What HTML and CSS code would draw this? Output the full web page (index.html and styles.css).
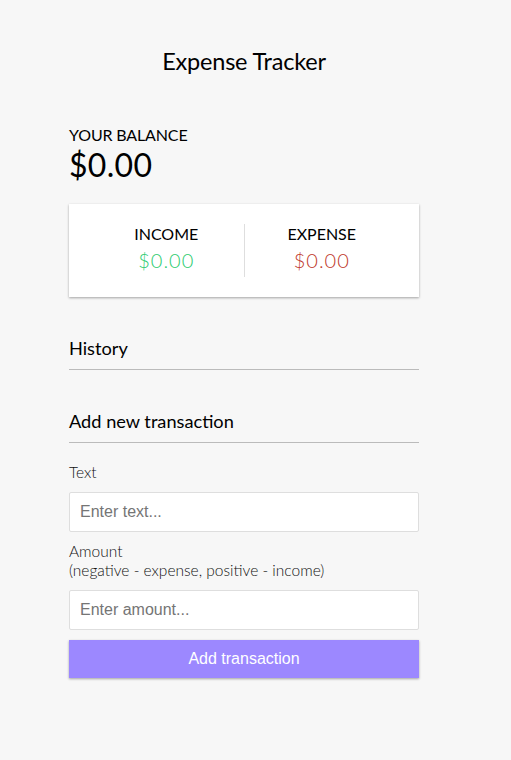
FILE: index.html
```
<!DOCTYPE html>
<html lang="en">
<head>
<meta charset="UTF-8">
<title>Expense Tracker</title>
<link rel="stylesheet" href="styles.css">
</head>
<body>
<div class="page">
  <h2 class="title">Expense Tracker</h2>
  <div class="container">
    <h4 class="balance-label">Your Balance</h4>
    <h1 class="balance">$0.00</h1>
    <div class="inc-exp">
      <div class="inc-exp-col">
        <h4 class="col-label">Income</h4>
        <p class="money plus">$0.00</p>
      </div>
      <div class="inc-exp-col">
        <h4 class="col-label">Expense</h4>
        <p class="money minus">$0.00</p>
      </div>
    </div>
    <h3 class="section">History</h3>
    <ul class="list"></ul>
    <h3 class="section section-add">Add new transaction</h3>
    <form class="form">
      <div class="form-control">
        <label class="label" for="text">Text</label>
        <input class="field" type="text" id="text" placeholder="Enter text...">
      </div>
      <div class="form-control">
        <label class="label" for="amount">Amount <br>(negative - expense, positive - income)</label>
        <input class="field" type="number" id="amount" placeholder="Enter amount...">
      </div>
      <button class="btn" type="button">Add transaction</button>
    </form>
  </div>
</div>
</body>
</html>
```
FILE: styles.css
```
* { box-sizing: border-box; }
body {
  margin: 0;
  background-color: #f7f7f7;
  font-family: Lato, "Open Sans", sans-serif;
  color: #000;
}
.page {
  width: 488px;
  padding-top: 46px;
}
.title {
  margin: 0;
  font-size: 23.5px;
  font-weight: 400;
  letter-spacing: -0.2px;
  text-align: center;
  line-height: 30px;
}
.container {
  width: 350px;
  margin: 0 auto;
  padding-top: 49px;
}
.balance-label {
  margin: 0;
  font-size: 16px;
  font-weight: 400;
  text-transform: uppercase;
  letter-spacing: -0.15px;
  line-height: 19px;
}
.balance {
  margin: 2px 0 0;
  font-size: 32px;
  font-weight: 400;
  letter-spacing: 0.3px;
  line-height: 38px;
}
.inc-exp {
  background-color: #fff;
  box-shadow: 0 1px 3px rgba(0,0,0,0.12), 0 1px 2px rgba(0,0,0,0.24);
  padding: 20px;
  display: flex;
  margin: 20px 0 0;
}
.inc-exp-col {
  flex: 1;
  text-align: center;
}
.inc-exp-col:first-child {
  border-right: 1px solid #dedede;
}
.col-label {
  margin: 0;
  font-size: 16px;
  font-weight: 400;
  text-transform: uppercase;
  line-height: 19px;
}
.money {
  font-size: 20px;
  font-weight: 300;
  letter-spacing: 1px;
  margin: 5px 0;
  line-height: 24px;
}
.plus { color: #2ecc71; }
.minus { color: #c0392b; }
.section {
  font-size: 18.2px;
  font-weight: 400;
  line-height: 24px;
  border-bottom: 1px solid #bbb;
  padding: 1px 0 9px;
  margin: 38px 0 10px;
}
.list {
  list-style: none;
  padding: 0;
  margin: 0 0 38px;
}
.section-add {
  margin-top: 0;
}
.form { margin: 0; }
.label {
  display: inline-block;
  margin: 10px 0;
  font-size: 15.5px;
  font-weight: 300;
  line-height: 19px;
  color: #111;
}
.field {
  display: block;
  width: 100%;
  border: 1px solid #dedede;
  border-radius: 2px;
  font-family: "Liberation Sans", Arial, sans-serif;
  font-size: 16px;
  padding: 10px;
  height: 40px;
  background: #fff;
  outline: none;
}
.field::placeholder { color: #757575; }
.field::-webkit-outer-spin-button,
.field::-webkit-inner-spin-button { -webkit-appearance: none; margin: 0; }
.btn {
  display: block;
  width: 100%;
  background-color: #9c88ff;
  box-shadow: 0 1px 3px rgba(0,0,0,0.12), 0 1px 2px rgba(0,0,0,0.24);
  color: #fff;
  border: 0;
  font-family: "Liberation Sans", Arial, sans-serif;
  font-size: 16px;
  margin: 10px 0 30px;
  padding: 10px;
  height: 38px;
}
```
